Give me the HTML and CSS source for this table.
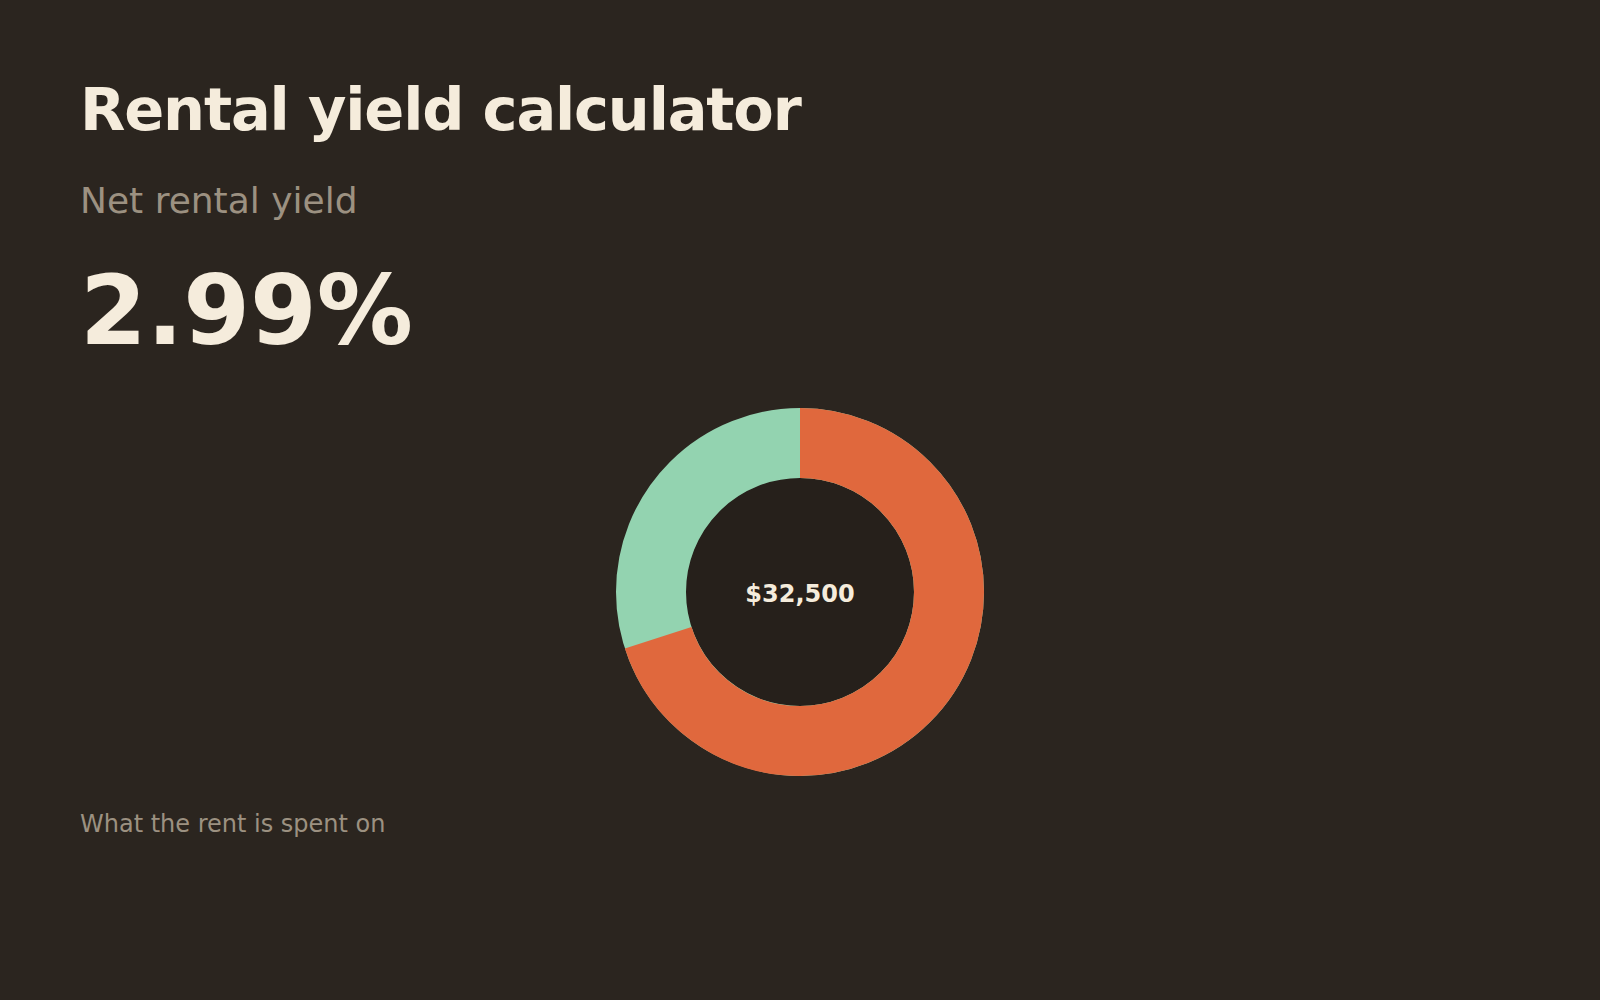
FILE: index.html
```html
<!DOCTYPE html>
<html lang="en">
<head>
<meta charset="utf-8">
<title>Rental yield calculator</title>
<link rel="stylesheet" href="styles.css">
</head>
<body>
<main class="page">
  <h1 class="title">Rental yield calculator</h1>
  <p class="label">Net rental yield</p>
  <p class="yield">2.99%</p>
  <div class="chart">
    <div class="donut">
      <svg class="donut-svg" width="368" height="368" viewBox="0 0 368 368">
        <circle cx="184" cy="184" r="114" fill="#26201b"/>
        <circle cx="184" cy="184" r="149" fill="none" stroke="#93d3b0" stroke-width="70"/>
        <circle cx="184" cy="184" r="149" fill="none" stroke="#e0683d" stroke-width="70"
          stroke-dasharray="655.4 1000" transform="rotate(-90 184 184)"/>
      </svg>
      <span class="donut-total">$32,500</span>
    </div>
  </div>
  <p class="caption">What the rent is spent on</p>
</main>
</body>
</html>
```

FILE: styles.css
```css
html, body {
  margin: 0;
  padding: 0;
  background: #2b251f;
}
body {
  font-family: "DejaVu Sans", sans-serif;
  color: #f5ecdc;
}
.page {
  padding: 77px 80px 40px;
  display: flex;
  flex-direction: column;
}
.title {
  margin: 0;
  font-size: 59px;
  font-weight: 700;
  line-height: 65px;
  letter-spacing: -0.02em;
  color: #f5ecdc;
}
.label {
  margin: 38px 0 0;
  font-size: 36px;
  line-height: 41px;
  color: #9c9181;
}
.yield {
  margin: 34px 0 0;
  font-size: 96px;
  font-weight: 700;
  line-height: 112px;
  color: #f5ecdc;
}
.chart {
  margin-top: 41px;
  display: flex;
  justify-content: center;
}
.donut {
  position: relative;
  width: 368px;
  height: 368px;
}
.donut-svg {
  display: block;
}
.donut-total {
  position: absolute;
  left: 0;
  right: 0;
  top: 50%;
  transform: translateY(-50%);
  text-align: center;
  font-size: 24px;
  font-weight: 700;
  color: #f5ecdc;
  margin-top: 2px;
}
.caption {
  margin: 34px 0 0;
  font-size: 24px;
  line-height: 28px;
  color: #9c9181;
}
```
